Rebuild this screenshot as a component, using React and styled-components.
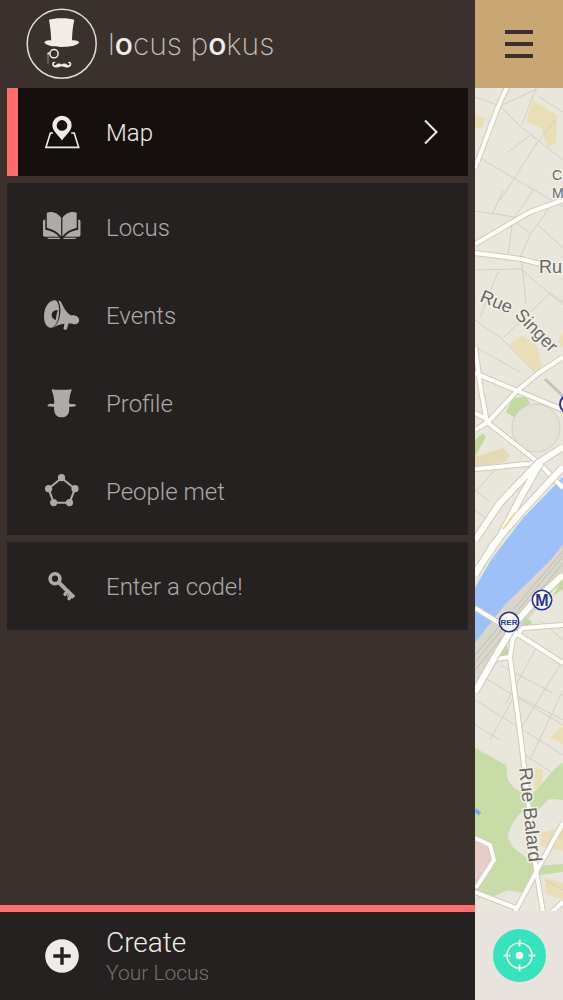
import React from 'react'
import styled, { createGlobalStyle } from 'styled-components'

const GlobalStyle = createGlobalStyle`
  * {
    box-sizing: border-box;
  }

  body {
    margin: 0;
    background: #3a302c;
    font-family: Roboto, 'Liberation Sans', sans-serif;
    font-weight: 300;
  }
`

const Page = styled.div`
  display: flex;
  min-height: 100vh;
`

const Drawer = styled.aside`
  flex: 1;
  min-width: 0;
  display: flex;
  flex-direction: column;
  background: #3a302c;
`

const Brand = styled.header`
  display: flex;
  align-items: center;
  gap: 10px;
  height: 88px;
  padding-left: 26px;
`

const Wordmark = styled.h1`
  margin: 0;
  color: #c9c0ba;
  font-family: Inter, Roboto, sans-serif;
  font-size: 30px;
  font-weight: 200;
  line-height: 36px;

  strong {
    color: #f2ece8;
    font-weight: 500;
  }
`

const Menu = styled.nav`
  flex: 1;
  display: flex;
  flex-direction: column;
  gap: 7px;
  padding: 0 7px 7px;
`

const Group = styled.div`
  background: #252120;
`

const Item = styled.a`
  display: flex;
  align-items: center;
  gap: 22px;
  height: 88px;
  padding: 0 30px 0 22px;
  border-left: 11px solid ${({ $active }) => ($active ? '#ff6e6c' : 'transparent')};
  background: ${({ $active }) => ($active ? '#15100e' : 'none')};
  color: ${({ $active }) => ($active ? '#f0ebe7' : '#aeaaa7')};
  font-size: 24px;
  line-height: 32px;
  text-decoration: none;
`

const Label = styled.span`
  flex: 1;
  padding-top: 2px;
`

const Create = styled.button`
  display: flex;
  align-items: center;
  gap: 22px;
  height: 95px;
  padding: 0 0 0 40px;
  border: 0;
  border-top: 7px solid #ff6e6c;
  background: #252120;
  color: #f0ebe7;
  font: inherit;
  text-align: left;
`

const CreateText = styled.span`
  padding-top: 2px;
`

const CreateTitle = styled.span`
  display: block;
  font-size: 28px;
  line-height: 32px;
`

const CreateNote = styled.span`
  display: block;
  color: #75706e;
  font-size: 21px;
  line-height: 28px;
`

const Peek = styled.main`
  width: 88px;
  display: flex;
  flex-direction: column;
  background: #e9e3de;
`

const MenuButton = styled.button`
  display: flex;
  flex-direction: column;
  align-items: center;
  justify-content: center;
  gap: 8px;
  height: 88px;
  padding: 0;
  border: 0;
  background: #c9a775;
`

const Bar = styled.span`
  width: 28px;
  height: 4px;
  background: #3a302c;
`

const MapArea = styled.div`
  flex: 1;
  display: flex;
  overflow: hidden;
  background: #e9e6dc;
`

const Tools = styled.footer`
  display: flex;
  align-items: center;
  justify-content: center;
  height: 89px;
`

const LocateButton = styled.button`
  display: flex;
  width: 53px;
  height: 53px;
  padding: 0;
  border: 0;
  border-radius: 50%;
  background: #35e4bf;
`

const Glyph = ({ children }) => (
  <svg width="44" height="44" viewBox="0 0 44 44" fill="currentColor" aria-hidden="true">
    {children}
  </svg>
)

const MapIcon = () => (
  <Glyph>
    <path
      fillRule="evenodd"
      d="M22 5.700a9.600 9.600 0 0 0-9.600 9.600c0 5.600 5.600 9.400 9.600 15.200 4-5.800 9.600-9.600 9.600-15.200A9.600 9.600 0 0 0 22 5.700zm0 4.400a5.300 5.300 0 1 1 0 10.600 5.300 5.300 0 0 1 0-10.600z"
    />
    <path d="M13 23h-2.600L5.900 37.400h32.800L34.200 23h-3" fill="none" stroke="currentColor" strokeWidth="1.600" />
  </Glyph>
)

const BookIcon = () => (
  <Glyph>
    <path d="M6.800 7.800C12 5.600 18 8 21.100 12.800V31.500C18 27 13 24.400 6.800 22.800z" />
    <path d="M36.700 7.800C31.500 5.600 25.500 8 22.400 12.800V31.500C25.500 27 30.500 24.400 36.700 22.800z" />
    <path d="M5.300 14.500C3.600 14.500 3 15.300 3 16.800V29.500C3 31 3.700 31.700 5 31.700H19C15.500 27.800 11 25.800 5.300 24.800z" />
    <path d="M38.200 14.500C39.900 14.500 40.500 15.300 40.500 16.800V29.500C40.500 31 39.800 31.700 38.500 31.700H24.500C28 27.800 32.500 25.800 38.200 24.800z" />
    <path d="M7 32.800H20V34H8.500zM23.500 32.800H36.500L35 34H23.500z" />
  </Glyph>
)

const EventsIcon = () => (
  <Glyph>
    <path
      fillRule="evenodd"
      d="M14.300 7.300C8.500 7.800 4.200 14.500 4 23.300C3.900 30.300 6.800 34.900 11 34.700C15.200 34.500 18.300 28.300 19 20.700C19.600 13.700 18.300 6.900 14.300 7.300zM18 17.300C14.500 16.800 11.600 18.800 11.700 22.300C11.800 24.800 13.500 26.300 15.800 27C16.300 24.500 16.300 20.500 18 17.300z"
    />
    <path d="M18.300 7.500C19.900 7.600 21 8.700 21.700 10.200C23.700 14.900 26.200 18.700 29.800 21.800C31.400 22.700 32.700 22.200 34.700 22.400C37.400 22.800 39.400 24.800 39.200 27.400C39 30.100 36.600 31.700 33.900 31.200L31.500 30.400L28.500 30.500L26.800 36.200C26.400 37.400 23.300 36.800 23.500 35.400L24.500 30.800C20 31.200 17 32.400 13 35.100C19.500 30.600 23 17 18.300 7.500z" />
  </Glyph>
)

const ProfileIcon = () => (
  <Glyph>
    <path d="M12.200 8.200c2.500.7 16.200.7 18.800 0 .7 0 .7.7.4 1.600-1.700 4.500-2.300 8.500-2.300 12.700 2.400.9 4.700.2 6.200.9.800.5.800 1.400 0 1.900-1.600.7-4 .2-6.100.6.700 6.500-2.200 10.400-7.500 10.400s-8.200-3.900-7.500-10.400c-2.100-.4-4.500.1-6.100-.6-.8-.5-.8-1.400 0-1.900 1.500-.7 3.800 0 6.200-.9 0-4.200-.7-8.200-2.400-12.700-.3-.9-.3-1.600.3-1.600z" />
  </Glyph>
)

const PeopleIcon = () => (
  <Glyph>
    <path d="M21.500 9L35 19.700l-5.500 14H13.700L8.500 19.700z" fill="none" stroke="currentColor" strokeWidth="2" />
    <circle cx="21.500" cy="8.700" r="3.600" />
    <circle cx="8.600" cy="19.700" r="3.600" />
    <circle cx="35" cy="19.700" r="3.600" />
    <circle cx="13.700" cy="33.600" r="3.600" />
    <circle cx="29.500" cy="33.600" r="3.600" />
  </Glyph>
)

const KeyIcon = () => (
  <Glyph>
    <g fill="none" stroke="currentColor">
      <circle cx="15" cy="14.700" r="4.900" strokeWidth="3.600" />
      <path d="M18.500 18.200l15.400 15.200" strokeWidth="4" />
      <path d="M27.800 27.300l-2.800 2.900M32 31.300l-3 3.300" strokeWidth="3.400" strokeLinecap="round" />
      <path d="M29 30.500l-2 2" strokeWidth="1.500" />
    </g>
  </Glyph>
)

const PlusIcon = () => (
  <Glyph>
    <circle cx="22" cy="22" r="16.800" />
    <path d="M13.300 22h17.400M22 13.300v17.400" stroke="#252120" strokeWidth="3.400" />
  </Glyph>
)

const Chevron = () => (
  <svg width="14" height="26" viewBox="0 0 14 26" fill="none" stroke="currentColor" strokeWidth="2" aria-hidden="true">
    <path d="M1 1.500L12.500 13 1 24.500" />
  </svg>
)

const Logo = () => (
  <svg width="72" height="72" viewBox="0 0 72 72" fill="#f2ece8" aria-hidden="true">
    <circle cx="35.700" cy="35.700" r="34.500" fill="none" stroke="#e4dcd6" strokeWidth="1.500" />
    <path d="M23 12c4-2.200 21-2.200 25.300 0-1.400 6-2.200 13-2.300 20.500 3-.6 5.700.3 7.300 2-2.300 3.200-9.500 4.400-17.600 4.400s-15.300-1.200-17.500-4.400c1.500-1.700 4-2.600 7-2C25 25 24.200 18 23 12z" />
    <g fill="none" stroke="#f2ece8">
      <circle cx="28" cy="45.700" r="4.100" strokeWidth="1.500" />
      <path d="M24 45c-1.500-.3-2 .3-2 1.500" strokeWidth="1.500" />
      <path d="M22 46v9.500" strokeWidth="1" strokeOpacity=".5" />
    </g>
    <path d="M35.700 56.500c-1.500-1.500-4-1.500-5.500.2-1 1-2.700.6-2.500-.9.200-.8 1-1 1.700-.6-.2-2.200-3.300-1.700-3.300.9 0 2.800 2.800 4 5.400 3.300 1.700-.4 3-1.200 4.200-1.200s2.500.8 4.200 1.200c2.600.7 5.400-.5 5.400-3.300 0-2.600-3.100-3.100-3.300-.9.700-.4 1.500-.2 1.700.6.200 1.500-1.500 1.900-2.500.9-1.500-1.700-4-1.700-5.500-.2z" />
  </svg>
)

const TargetIcon = () => (
  <svg width="53" height="53" viewBox="0 0 53 53" fill="none" stroke="#f2f3ea" strokeWidth="2" aria-hidden="true">
    <circle cx="26.500" cy="26.500" r="12.500" strokeWidth="1.600" />
    <circle cx="26.500" cy="26.500" r="3.800" fill="#f2f3ea" stroke="none" />
    <path d="M26.500 10.500v7M26.500 35.500v7M10.500 26.500h7M35.500 26.500h7" />
  </svg>
)

const lanes = [
  'M475 97L500 106 520 126 563 160M500 106L537 89M536 88L522 125M537 143L500 200M480 158L563 207',
  'M533 133L508 152M537 143L555 120M538 96L563 112M475 211L515 217 533 190M503 190L493 213',
  'M513 218L508 255M550 207L530 235 521 255 526 303M515 222L530 233M538 225L563 248',
  'M475 270L521 269 563 305M498 272L480 317M550 293L503 338M550 293L563 302M475 320L501 338 535 372',
  'M475 347L520 372M475 490L490 502M477 490L497 468M475 510L488 520M480 675L563 725M500 665L553 693',
  'M535 650L505 705M563 660L520 730M475 700L563 755M490 740L512 700M475 725L500 740M515 695L563 720',
  'M540 620L563 640M563 690L530 760M475 655L500 627M525 755L563 780M475 900L520 880M545 880L563 890'
]

const streets = [
  'M507 87L498 107 475 168',
  'M475 244L530 212 563 200',
  'M475 253L521 259 545 265',
  'M475 347L481 390 487 422',
  'M475 373L513 389 563 410',
  'M563 357L540 372 518 390 488 422 475 430',
  'M475 413L487 419',
  'M487 422L538 462 563 488',
  'M475 469L538 463',
  'M475 608L516 633 563 663',
  'M563 625L523 628 513 638 510 657 521 740 536 870 543 912',
  'M510 657L496 659',
  'M563 823L536 872 515 912',
  'M475 892L516 908M552 912L563 902',
  'M475 838L490 845 494 860 476 888'
]

const avenues = [
  'M563 447L538 463 500 503 475 540',
  'M541 462L523 493 500 537 475 573',
  'M563 467L523 510 493 545 475 575',
  'M563 575L533 603 516 622 496 655 475 692'
]

const Roads = ({ paths, width }) => (
  <g fill="none" strokeLinejoin="round">
    <path d={paths.join('')} stroke="#cfcabd" strokeWidth={width + 2} />
    <path d={paths.join('')} stroke="#fffffb" strokeWidth={width} />
  </g>
)

const Station = ({ x, y, size, children }) => (
  <g>
    <circle cx={x} cy={y} r="9.700" fill="#fff" stroke="#28309a" strokeWidth="1.600" />
    <text x={x} y={y} dy=".36em" textAnchor="middle" fontSize={size} fontWeight="700" fill="#28309a">
      {children}
    </text>
  </g>
)

const CityMap = () => (
  <svg
    width="100%"
    viewBox="475 88 88 823"
    preserveAspectRatio="xMinYMin slice"
    fontFamily="'Liberation Sans', sans-serif"
    fontWeight="400"
    role="img"
    aria-label="Street map"
  >
    <path fill="#eadfb4" d="M533 101l24 14-1 27-8 6-7-20-15-6zM475 115l10 3-3 11-7-2zM523 335l14 12 5 20-7 5-26-27zM563 332v15l-5-5z" />
    <path fill="#e6d9b5" d="M475 457l28-9 7 7-5 7-30 5z" />
    <path fill="#c3d9a0" d="M513 398l13-1 4 6-15 15-9-6zM475 440l8-7 3 4-11 20z" />
    <path
      fill="#c8dca8"
      d="M475 748l31 17c2 6-1 12 4 18 6 8 12 10 22 11l6-6c8-8 14-18 25-26v38c-6 0-13-3-17 2l-10 10-16 1c-6 8-11 14-12 24 2 8 6 12 14 17l14 12 27-2v8l-23 3-17 18-15-3-13 6-20-3z"
    />
    <path fill="#eadfb4" d="M541 833l22-6v24l-22-5zM545 878l18 5v17l-18-7zM535 768l8 2-2 15-7 5zM550 738l13-12v18z" />
    <path fill="#e8ccc8" d="M475 838l15 7 4 15-19 27z" />
    <path d="M475 810l5 4" stroke="#7ba7ee" strokeWidth="4" />
    {lanes.map(d => (
      <path key={d} d={d} fill="none" stroke="#d2cfc3" strokeWidth="1" />
    ))}
    <circle cx="536" cy="428" r="24" fill="#e5e2d8" stroke="#d3cfc4" />
    <path fill="#9dc0f9" d="M563 477l-40 41-32 42-16 28v55l30-38 46-45 12-15z" />
    <path fill="#dad7ca" d="M563 545l-12 15-46 45-30 38v40l28-36 60-67z" />
    <path
      d="M563 551L475 655M563 556L475 662M563 563L475 670"
      stroke="#bfbcb2"
      strokeWidth="1"
    />
    <path fill="#c3d9a0" d="M505 638l4 17-11 3zM563 577v12l-10 7zM525 617l7 5-2 4-9 2z" />
    <path d="M545 379l18 17" stroke="#c4c2bb" strokeWidth="3" />
    <Roads paths={streets} width={4} />
    <Roads paths={avenues} width={6} />
    <path d="M516 512l-13 17" stroke="#f3d894" strokeWidth="2" />
    <path id="singer" d="M479 301L506 312Q514 315 520 322L556 359" fill="none" />
    <g fill="#686764" stroke="#f2f0e8" strokeWidth="3" strokeLinejoin="round" paintOrder="stroke" fontSize="18">
      <text>
        <textPath href="#singer">Rue Singer</textPath>
      </text>
      <text x="539" y="273">Ru</text>
      <text transform="translate(519 768) rotate(84)" fontSize="19">Rue Balard</text>
      <text x="552" y="180" fontSize="14">C</text>
      <text x="552" y="198" fontSize="14">M</text>
    </g>
    <circle cx="569" cy="404" r="9" fill="#fff" stroke="#28309a" strokeWidth="2" />
    <Station x={542} y={600} size={16}>M</Station>
    <Station x={509} y={622} size={8}>RER</Station>
  </svg>
)

const places = [
  { label: 'Locus', Icon: BookIcon },
  { label: 'Events', Icon: EventsIcon },
  { label: 'Profile', Icon: ProfileIcon },
  { label: 'People met', Icon: PeopleIcon }
]

const App = () => (
  <>
    <GlobalStyle />
    <Page>
      <Drawer>
        <Brand>
          <Logo />
          <Wordmark>
            l<strong>o</strong>cus p<strong>o</strong>kus
          </Wordmark>
        </Brand>
        <Menu>
          <Group>
            <Item href="#map" $active aria-current="page">
              <MapIcon />
              <Label>Map</Label>
              <Chevron />
            </Item>
          </Group>
          <Group>
            {places.map(({ label, Icon }) => (
              <Item key={label} href={`#${label}`}>
                <Icon />
                <Label>{label}</Label>
              </Item>
            ))}
          </Group>
          <Group>
            <Item href="#code">
              <KeyIcon />
              <Label>Enter a code!</Label>
            </Item>
          </Group>
        </Menu>
        <Create type="button">
          <PlusIcon />
          <CreateText>
            <CreateTitle>Create</CreateTitle>
            <CreateNote>Your Locus</CreateNote>
          </CreateText>
        </Create>
      </Drawer>
      <Peek>
        <MenuButton type="button" aria-label="Close menu">
          <Bar />
          <Bar />
          <Bar />
        </MenuButton>
        <MapArea>
          <CityMap />
        </MapArea>
        <Tools>
          <LocateButton type="button" aria-label="Find my position">
            <TargetIcon />
          </LocateButton>
        </Tools>
      </Peek>
    </Page>
  </>
)

export default App
